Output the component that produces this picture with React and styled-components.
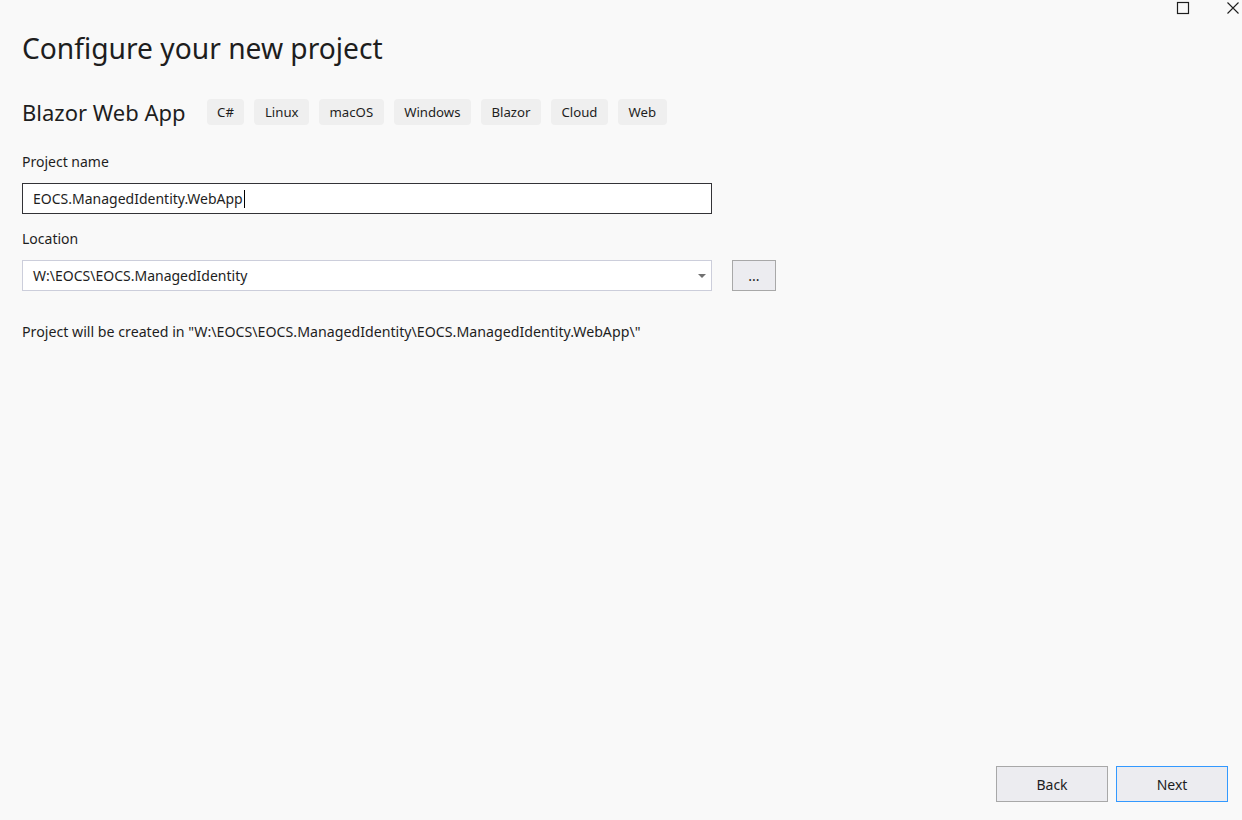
import React from "react";
import styled, { createGlobalStyle } from "styled-components";

const GlobalStyle = createGlobalStyle`
  html, body {
    margin: 0;
    padding: 0;
    background: #f9f9f9;
  }
  body {
    font-family: "Segoe UI", "Noto Sans", "Open Sans", sans-serif;
    color: #1e1e1e;
  }
`;

const Window = styled.div`
  position: relative;
  width: 1242px;
  height: 820px;
  background: #f9f9f9;
  box-sizing: border-box;
  display: flex;
  flex-direction: column;
  padding: 0 14px 18px 22px;
`;

const Controls = styled.div`
  position: absolute;
  top: 1px;
  right: 2px;
  display: flex;
  gap: 36px;
  align-items: center;
`;

const Title = styled.h1`
  margin: 28px 0 0;
  font-size: 28.2px;
  font-weight: 400;
  line-height: 40px;
  color: #1e1e1e;
`;

const TemplateRow = styled.div`
  display: flex;
  align-items: center;
  margin-top: 30px;
`;

const TemplateName = styled.div`
  font-size: 22px;
  line-height: 28px;
  margin-right: 21px;
`;

const Tags = styled.div`
  display: flex;
  gap: 10px;
`;

const Tag = styled.span`
  background: #efefef;
  border-radius: 4px;
  height: 26px;
  padding: 0 10.5px;
  display: flex;
  align-items: center;
  font-size: 13.2px;
  color: #1e1e1e;
`;

const Label = styled.div`
  font-size: 14px;
  line-height: 20px;
  margin-top: ${(p) => p.$top}px;
`;

const Field = styled.div`
  width: 690px;
  height: 31px;
  box-sizing: border-box;
  background: #ffffff;
  border: 1px solid ${(p) => (p.$focused ? "#333337" : "#cccedb")};
  display: flex;
  align-items: center;
  padding: 0 10px;
  font-size: 14px;
  margin-top: 11px;
  position: relative;
`;

const Caret = styled.span`
  display: inline-block;
  width: 1.5px;
  height: 18px;
  background: #000;
  margin-left: 1px;
`;

const Arrow = styled.span`
  position: absolute;
  right: 5px;
  top: 13px;
  width: 0;
  height: 0;
  border-left: 4px solid transparent;
  border-right: 4px solid transparent;
  border-top: 4px solid #717171;
`;

const LocationRow = styled.div`
  display: flex;
  align-items: flex-end;
  gap: 20px;
`;

const Button = styled.button`
  font-family: inherit;
  background: #ececf0;
  border: 1px solid ${(p) => (p.$primary ? "#3399ff" : "#a8a8a8")};
  color: #1e1e1e;
  font-size: 14px;
  width: ${(p) => p.$w}px;
  height: ${(p) => p.$h}px;
  padding: 0;
  cursor: pointer;
`;

const Info = styled.div`
  font-size: 14.2px;
  margin-top: 31px;
  line-height: 20px;
`;

const Spacer = styled.div`
  flex: 1;
`;

const Footer = styled.div`
  display: flex;
  justify-content: flex-end;
  gap: 8px;
`;

export default function App() {
  const tags = ["C#", "Linux", "macOS", "Windows", "Blazor", "Cloud", "Web"];
  return (
    <>
      <GlobalStyle />
      <Window>
        <Controls>
          <svg width="14" height="14" viewBox="0 0 14 14">
            <rect x="1.5" y="1.5" width="11" height="11" fill="none" stroke="#1e1e1e" strokeWidth="1.2" />
          </svg>
          <svg width="14" height="14" viewBox="0 0 14 14">
            <path d="M1.5 1.5 L12.5 12.5 M12.5 1.5 L1.5 12.5" stroke="#1e1e1e" strokeWidth="1.1" />
          </svg>
        </Controls>
        <Title>Configure your new project</Title>
        <TemplateRow>
          <TemplateName>Blazor Web App</TemplateName>
          <Tags>
            {tags.map((t) => (
              <Tag key={t}>{t}</Tag>
            ))}
          </Tags>
        </TemplateRow>
        <Label $top={26}>Project name</Label>
        <Field $focused>
          EOCS.ManagedIdentity.WebApp
          <Caret />
        </Field>
        <Label $top={15}>Location</Label>
        <LocationRow>
          <Field>
            W:\EOCS\EOCS.ManagedIdentity
            <Arrow />
          </Field>
          <Button $w={44} $h={31}>...</Button>
        </LocationRow>
        <Info>
          Project will be created in "W:\EOCS\EOCS.ManagedIdentity\EOCS.ManagedIdentity.WebApp\"
        </Info>
        <Spacer />
        <Footer>
          <Button $w={112} $h={36}>Back</Button>
          <Button $w={112} $h={36} $primary>Next</Button>
        </Footer>
      </Window>
    </>
  );
}
